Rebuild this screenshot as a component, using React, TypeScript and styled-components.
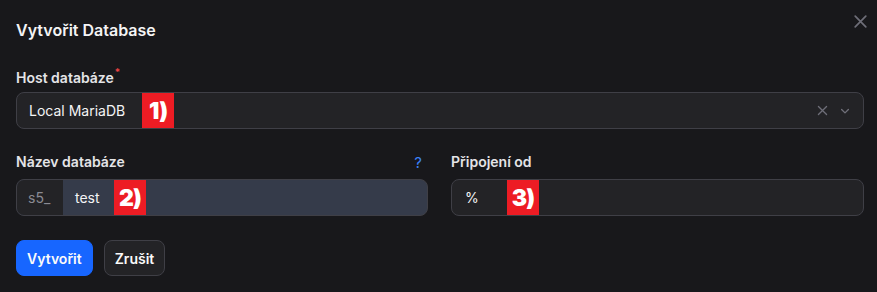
import React from 'react'
import styled, { createGlobalStyle } from 'styled-components'

const Global = createGlobalStyle`
  html, body {
    margin: 0;
    background: #18181b;
  }
  body {
    font-family: Inter, "Noto Sans", sans-serif;
    color: #f4f4f5;
  }
`

const Dialog = styled.div`
  position: relative;
  width: 877px;
  height: 292px;
  box-sizing: border-box;
  padding: 18px 13px 0 16px;
  background: #18181b;
`

const Title = styled.h2`
  margin: 0;
  font-size: 16px;
  font-weight: 600;
  line-height: 24px;
  color: #f4f4f5;
`

const CloseButton = styled.button`
  position: absolute;
  top: 12px;
  right: 8px;
  width: 18px;
  height: 18px;
  padding: 0;
  border: 0;
  background: none;
  color: #6e6e78;
  display: flex;
  align-items: center;
  justify-content: center;
`

const Field = styled.div`
  display: flex;
  flex-direction: column;
  gap: 8px;
  min-width: 0;
`

const LabelRow = styled.div`
  display: flex;
  align-items: center;
  justify-content: space-between;
  height: 18px;
`

const Label = styled.label`
  font-size: 14px;
  font-weight: 600;
  color: #e4e4e7;
  line-height: 18px;
`

const Star = styled.sup`
  color: #ef4444;
  font-size: 10px;
  margin-left: 1px;
  position: relative;
  top: -1px;
`

const Help = styled.span`
  color: #3b82f6;
  font-size: 15px;
  margin-right: 6px;
`

const Box = styled.div<{ $tint?: boolean }>`
  position: relative;
  display: flex;
  align-items: center;
  height: 37px;
  box-sizing: border-box;
  border: 1px solid #3f3f46;
  border-radius: 8px;
  background: ${p => (p.$tint ? '#353b4a' : '#232326')};
  overflow: hidden;
  font-size: 14px;
  color: #f4f4f5;
`

const Value = styled.span<{ $pad?: number }>`
  padding-left: ${p => p.$pad ?? 12}px;
  flex: 1;
`

const Prefix = styled.span`
  align-self: stretch;
  display: flex;
  align-items: center;
  width: 46px;
  box-sizing: border-box;
  padding-left: 11px;
  background: #232326;
  color: #8a8a93;
`

const Icons = styled.div`
  display: flex;
  align-items: center;
  gap: 10px;
  padding-right: 12px;
  color: #6e6e78;
`

const Grid = styled.div`
  display: grid;
  grid-template-columns: 412px 413px;
  column-gap: 23px;
  margin-top: 24px;
`

const Actions = styled.div`
  display: flex;
  gap: 11px;
  margin-top: 24px;
`

const Button = styled.button<{ $primary?: boolean }>`
  height: 36px;
  box-sizing: border-box;
  padding: 0 10px;
  border-radius: 8px;
  font-family: inherit;
  font-size: 14px;
  font-weight: 600;
  color: #fafafa;
  border: 1px solid ${p => (p.$primary ? '#1766ff' : '#3f3f46')};
  background: ${p => (p.$primary ? '#1766ff' : '#232326')};
`

const Badge = styled.span<{ $left: number }>`
  position: absolute;
  top: -1px;
  bottom: -1px;
  left: ${p => p.$left}px;
  width: 32px;
  background: #ed1c24;
  color: #fff;
  font-size: 23px;
  font-weight: 900;
  display: flex;
  align-items: center;
  justify-content: center;
  letter-spacing: -1px;
`

const X = ({ size }: { size: number }) => (
  <svg width={size} height={size} viewBox="0 0 16 16" fill="none" stroke="currentColor" strokeWidth="1.6" strokeLinecap="round">
    <path d="M3 3l10 10M13 3L3 13" />
  </svg>
)

const Chevron = () => (
  <svg width="12" height="12" viewBox="0 0 16 16" fill="none" stroke="currentColor" strokeWidth="1.8" strokeLinecap="round" strokeLinejoin="round">
    <path d="M3.5 6l4.5 4.5L12.5 6" />
  </svg>
)

export default function App() {
  return (
    <>
      <Global />
      <Dialog>
        <Title>Vytvořit Database</Title>
        <CloseButton aria-label="close"><X size={17} /></CloseButton>

        <Field style={{ marginTop: 24 }}>
          <LabelRow>
            <Label>Host databáze<Star>*</Star></Label>
          </LabelRow>
          <Box>
            <Value>Local MariaDB</Value>
            <Icons>
              <X size={13} />
              <Chevron />
            </Icons>
            <Badge $left={125}>1)</Badge>
          </Box>
        </Field>

        <Grid>
          <Field>
            <LabelRow>
              <Label>Název databáze</Label>
              <Help>?</Help>
            </LabelRow>
            <Box $tint>
              <Prefix>s5_</Prefix>
              <Value>test</Value>
              <Badge $left={97}>2)</Badge>
            </Box>
          </Field>
          <Field>
            <LabelRow>
              <Label>Připojení od</Label>
            </LabelRow>
            <Box>
              <Value $pad={13}>%</Value>
              <Badge $left={55}>3)</Badge>
            </Box>
          </Field>
        </Grid>

        <Actions>
          <Button $primary>Vytvořit</Button>
          <Button>Zrušit</Button>
        </Actions>
      </Dialog>
    </>
  )
}
